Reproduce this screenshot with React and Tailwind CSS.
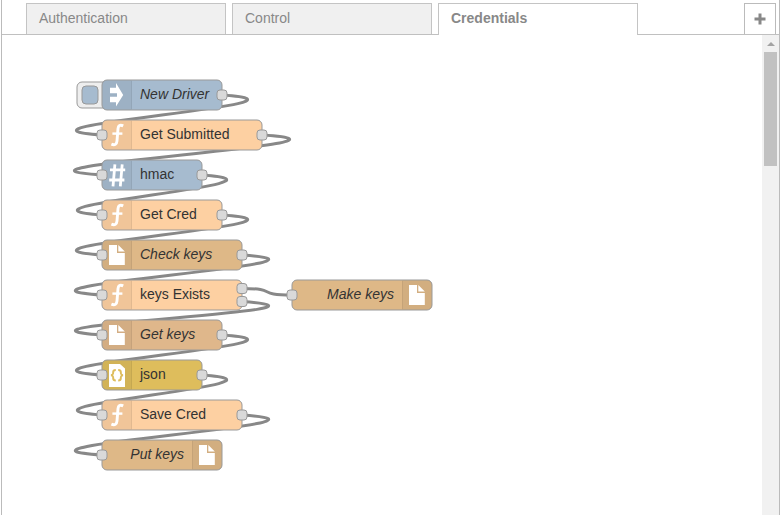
import React from "react";

const NODES = [
  { id: "new", x: 102, y: 80, w: 120, color: "#a6bbcf", label: "New Driver", italic: true, icon: "inject", inputs: 0, outputs: 1, button: true },
  { id: "sub", x: 102, y: 120, w: 160, color: "#fdd0a2", label: "Get Submitted", icon: "func", inputs: 1, outputs: 1 },
  { id: "hmac", x: 102, y: 160, w: 100, color: "#a6bbcf", label: "hmac", icon: "hash", inputs: 1, outputs: 1 },
  { id: "cred", x: 102, y: 200, w: 120, color: "#fdd0a2", label: "Get Cred", icon: "func", inputs: 1, outputs: 1 },
  { id: "check", x: 102, y: 240, w: 140, color: "#deb887", label: "Check keys", italic: true, icon: "file", inputs: 1, outputs: 1 },
  { id: "exists", x: 102, y: 280, w: 140, color: "#fdd0a2", label: "keys Exists", icon: "func", inputs: 1, outputs: 2 },
  { id: "make", x: 292, y: 280, w: 140, color: "#deb887", label: "Make keys", italic: true, icon: "file", right: true, inputs: 1, outputs: 0 },
  { id: "get", x: 102, y: 320, w: 120, color: "#dfb78b", label: "Get keys", italic: true, icon: "file", inputs: 1, outputs: 1 },
  { id: "json", x: 102, y: 360, w: 100, color: "#debd5c", label: "json", icon: "json", inputs: 1, outputs: 1 },
  { id: "save", x: 102, y: 400, w: 140, color: "#fdd0a2", label: "Save Cred", icon: "func", inputs: 1, outputs: 1 },
  { id: "put", x: 102, y: 440, w: 120, color: "#deb887", label: "Put keys", italic: true, icon: "file", right: true, inputs: 1, outputs: 0 },
];

const WIRES = [
  ["new", 0, "sub"],
  ["sub", 0, "hmac"],
  ["hmac", 0, "cred"],
  ["cred", 0, "check"],
  ["check", 0, "exists"],
  ["exists", 0, "make"],
  ["exists", 1, "get"],
  ["get", 0, "json"],
  ["json", 0, "save"],
  ["save", 0, "put"],
];

const byId = Object.fromEntries(NODES.map((n) => [n.id, n]));
const outY = (n, i) => 15 - ((n.outputs - 1) / 2) * 13 + i * 13;

// Cubic wire whose handles grow when the target sits behind the source
function wirePath([from, port, to]) {
  const a = byId[from];
  const b = byId[to];
  const x1 = a.x + a.w;
  const y1 = a.y + outY(a, port);
  const x2 = b.x;
  const y2 = b.y + 15;
  const dx = x2 - x1;
  const dy = y2 - y1;
  const delta = Math.hypot(dx, dy);
  let scale = delta < 100 ? 0.75 - 0.75 * ((100 - delta) / 100) : 0.75;
  let sy = 0;
  if (dx < 0) {
    scale += 2 * (Math.min(500, -dx) / 500);
    if (Math.abs(dy) < 90) {
      sy = (dy > 0 ? 0.5 : -0.5) * ((90 - Math.abs(dy)) / 90) * (Math.min(100, -dx) / 100);
    }
  }
  return `M${x1} ${y1} C${x1 + 100 * scale} ${y1 + sy * 30} ${x2 - 100 * scale} ${y2 - sy * 30} ${x2} ${y2}`;
}

function Icon({ name, color }) {
  if (name === "inject")
    return (
      <path fill="#fff" d="M8 7.7h6V3L21.2 15 14 26.6v-4.4H8v-5.4h7v-3.6H8z" />
    );
  if (name === "func")
    return (
      <g fill="none" stroke="#fff" strokeWidth="2.9">
        <path d="M21.2 5.9C18 4.3 16.3 5.6 16 8.6L15 20.8C14.7 24.4 12.8 25.6 9.4 24.2" />
        <path d="M10.4 13.6h10" strokeWidth="2.4" />
      </g>
    );
  if (name === "hash")
    return (
      <g fill="none" stroke="#fff" strokeWidth="2.8">
        <path d="M12.9 4.3l-1.9 22M20.2 4.3l-1.9 22M8 9.9h15.2M7.2 20h15.2" />
      </g>
    );
  if (name === "file")
    return (
      <g fill="#fff">
        <path d="M7 5h8v8h7.8v12H7z" />
        <path d="M16.3 5l6.5 6.6h-6.5z" />
      </g>
    );
  return (
    <g>
      <path fill="#fff" d="M7 4h11l5 4.6V27H7z" />
      <g fill="none" stroke={color} strokeWidth="2">
        <path d="M13.8 9.9c-2 0-2.6.6-2.6 2.2 0 2 0 2.8-2.2 3.1 2.2.3 2.2 1.1 2.2 3.1 0 1.6.6 2.2 2.6 2.2M16.2 9.9c2 0 2.6.6 2.6 2.2 0 2 0 2.8 2.2 3.1-2.2.3-2.2 1.1-2.2 3.1 0 1.6-.6 2.2-2.6 2.2" />
      </g>
    </g>
  );
}

function Port({ x, y }) {
  return <rect x={x - 5} y={y - 5} width="10" height="10" rx="3" fill="#d9d9d9" stroke="#999" />;
}

function FlowNode({ node }) {
  const { x, y, w, color, right } = node;
  const ix = right ? w - 30 : 0;
  return (
    <div className="absolute h-[30px]" style={{ left: x, top: y, width: w }}>
      <svg className="absolute left-0 top-0 overflow-visible" width={w} height="30">
        {node.button && (
          <g stroke="#999">
            <rect x="-25" y="2" width="32" height="26" rx="5" fill="#eee" />
            <rect x="-20" y="6" width="16" height="18" rx="4" fill={color} />
          </g>
        )}
        <rect width={w} height="30" rx="5" fill={color} stroke="#999" />
        <path
          d={right ? `M${ix} .5H${w - 4.5}a4 4 0 0 1 4 4V25.5a4 4 0 0 1 -4 4H${ix}z` : "M30 .5H4.5a4 4 0 0 0 -4 4V25.5a4 4 0 0 0 4 4H30z"}
          fill="#000"
          fillOpacity=".05"
        />
        <path d={`M${right ? ix + 0.5 : 29.5} 1V29`} stroke="#000" strokeOpacity=".06" />
        <g transform={`translate(${ix} 0)`}>
          <Icon name={node.icon} color={color} />
        </g>
        {node.inputs > 0 && <Port x={0} y={15} />}
        {Array.from({ length: node.outputs }, (_, i) => (
          <Port key={i} x={w} y={outY(node, i)} />
        ))}
      </svg>
      <div
        className={`relative h-full whitespace-nowrap text-sm leading-[28px] text-[#333] ${right ? "pr-[38px] text-right" : "pl-[38px]"} ${node.italic ? "italic" : ""}`}
      >
        {node.label}
      </div>
    </div>
  );
}

function Tab({ label, active }) {
  return (
    <div
      className={`w-[200px] border border-b-0 border-[#c4c4c4] pl-3 text-sm leading-[29px] text-[#888] ${active ? "h-8 bg-white font-bold" : "h-[31px] bg-[#f0f0f0]"}`}
    >
      {label}
    </div>
  );
}

export default function App() {
  return (
    <div className="h-[515px] w-[780px] overflow-hidden bg-white pl-px font-['Liberation_Sans',Arial,sans-serif]">
      <div className="flex h-full flex-col border-x border-[#bbb]">
        <div className="flex h-[35px] shrink-0 items-start bg-[linear-gradient(#c0c0c0,#c0c0c0)] bg-[length:100%_1px] bg-bottom bg-no-repeat pl-6 pr-[3px] pt-[3px]">
          <div className="flex gap-1.5">
            <Tab label="Authentication" />
            <Tab label="Control" />
            <Tab label="Credentials" active />
          </div>
          <div className="ml-auto flex h-[31px] w-8 items-center justify-center border border-b-0 border-[#bbb]">
            <svg width="12" height="12" viewBox="0 0 12 12">
              <path d="M6 .5v11M.5 6h11" stroke="#888" strokeWidth="3" />
            </svg>
          </div>
        </div>
        <div className="flex min-h-0 grow">
          <div className="relative grow">
            {/* canvas coordinates are measured from the window corner */}
            <div className="absolute -left-0.5 -top-[35px]">
              <svg className="absolute left-0 top-0" width="760" height="515" fill="none" stroke="#888" strokeWidth="3">
                {WIRES.map((w) => (
                  <path key={w.join()} d={wirePath(w)} />
                ))}
              </svg>
              {NODES.map((n) => (
                <FlowNode key={n.id} node={n} />
              ))}
            </div>
          </div>
          <div className="flex w-[17px] flex-col items-center bg-[#f1f1f1]">
            <div className="flex h-[17px] items-center">
              <svg width="8" height="4" viewBox="0 0 8 4">
                <path d="M0 4L4 0l4 4z" fill="#a3a3a3" />
              </svg>
            </div>
            <div className="h-[114px] w-[13px] bg-[#c1c1c1]" />
          </div>
        </div>
      </div>
    </div>
  );
}
